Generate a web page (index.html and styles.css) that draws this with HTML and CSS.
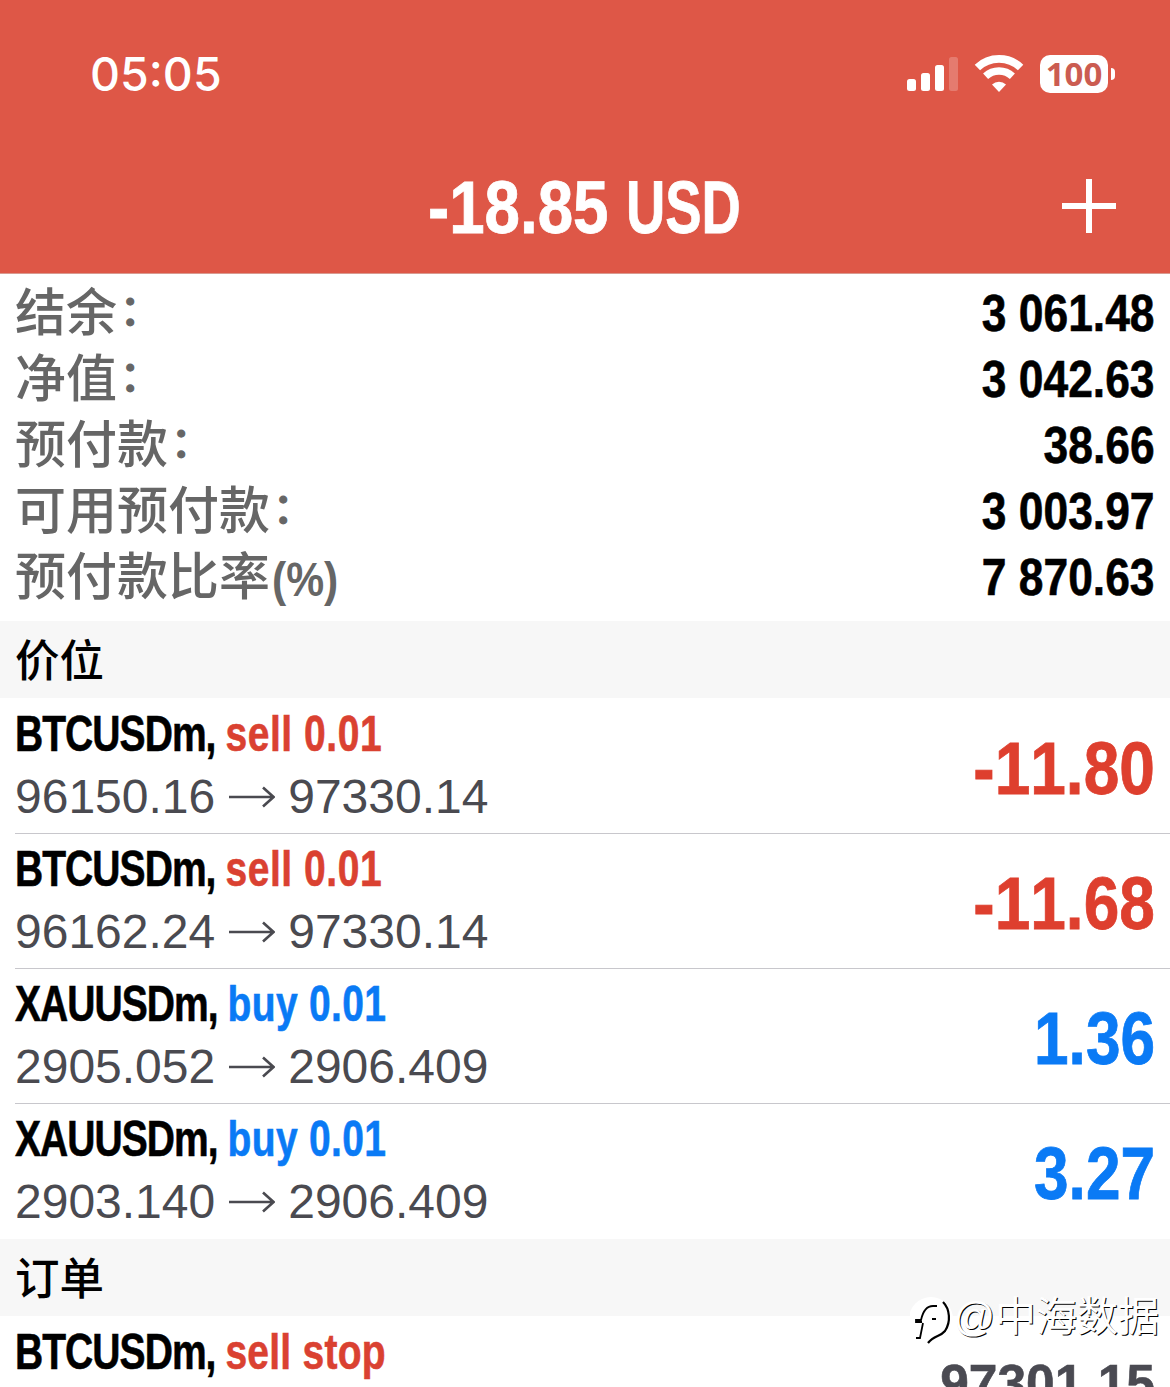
FILE: index.html
```html
<!DOCTYPE html>
<html lang="zh-CN">
<head>
  <meta charset="UTF-8">
  <title>交易</title>
  <link rel="stylesheet" href="styles.css">
</head>
<body>

  <div class="screen">
    <header class="header">
      <div class="status-bar">
        <span class="time">05:05</span>
        <div class="status-icons">
          <svg class="signal" width="52" height="36" viewBox="0 0 52 36" fill="#fff">
            <rect x="0" y="23" width="9" height="12" rx="2.5"/>
            <rect x="14" y="17" width="9" height="18" rx="2.5"/>
            <rect x="28" y="9" width="9" height="26" rx="2.5"/>
            <rect x="42" y="1" width="9" height="34" rx="2.5" opacity="0.22"/>
          </svg>
          <svg class="wifi" width="50" height="38" viewBox="0 0 50 38">
            <path d="M3.4 12.5 A31.5 31.5 0 0 1 46.6 12.5" fill="none" stroke="#fff" stroke-width="7.8"/>
            <path d="M11.6 21.3 A19.7 19.7 0 0 1 38.4 21.3" fill="none" stroke="#fff" stroke-width="7.4"/>
            <path d="M25 37 L18 29.5 A10.5 10.5 0 0 1 32 29.5 Z" fill="#fff"/>
          </svg>
          <div class="battery"><span>100</span></div>
        </div>
      </div>
      <div class="title-bar">
        <h1><span class="amount">-18.85</span> <span class="currency">USD</span></h1>
        <svg class="plus" width="54" height="54" viewBox="0 0 54 54" fill="#fff">
          <rect x="24" y="0" width="6" height="54"/>
          <rect x="0" y="24" width="54" height="6"/>
        </svg>
      </div>
    </header>

    <div class="summary">
      <div class="summary-row"><span class="label">结余<i>：</i></span><span class="value">3 061.48</span></div>
      <div class="summary-row"><span class="label">净值<i>：</i></span><span class="value">3 042.63</span></div>
      <div class="summary-row"><span class="label">预付款<i>：</i></span><span class="value">38.66</span></div>
      <div class="summary-row"><span class="label">可用预付款<i>：</i></span><span class="value">3 003.97</span></div>
      <div class="summary-row"><span class="label">预付款比率<b>(%)</b></span><span class="value">7 870.63</span></div>
    </div>

    <h2 class="section-title">价位</h2>
    <div class="list">
      <div class="item">
        <div class="info">
          <div class="symbol">BTCUSDm, <span class="sell">sell 0.01</span></div>
          <div class="prices">96150.16<svg class="arrow" width="46" height="22" viewBox="0 0 46 22"><path d="M0 11H44M34 1.5L44.5 11L34 20.5"/></svg>97330.14</div>
        </div>
        <div class="profit loss">-11.80</div>
      </div>
      <div class="item">
        <div class="info">
          <div class="symbol">BTCUSDm, <span class="sell">sell 0.01</span></div>
          <div class="prices">96162.24<svg class="arrow" width="46" height="22" viewBox="0 0 46 22"><path d="M0 11H44M34 1.5L44.5 11L34 20.5"/></svg>97330.14</div>
        </div>
        <div class="profit loss">-11.68</div>
      </div>
      <div class="item">
        <div class="info">
          <div class="symbol">XAUUSDm, <span class="buy">buy 0.01</span></div>
          <div class="prices">2905.052<svg class="arrow" width="46" height="22" viewBox="0 0 46 22"><path d="M0 11H44M34 1.5L44.5 11L34 20.5"/></svg>2906.409</div>
        </div>
        <div class="profit gain">1.36</div>
      </div>
      <div class="item">
        <div class="info">
          <div class="symbol">XAUUSDm, <span class="buy">buy 0.01</span></div>
          <div class="prices">2903.140<svg class="arrow" width="46" height="22" viewBox="0 0 46 22"><path d="M0 11H44M34 1.5L44.5 11L34 20.5"/></svg>2906.409</div>
        </div>
        <div class="profit gain">3.27</div>
      </div>
    </div>

    <h2 class="section-title">订单</h2>
    <div class="list">
      <div class="item">
        <div class="info">
          <div class="symbol">BTCUSDm, <span class="sell stop">sell stop</span></div>
        </div>
        <div class="order-price">97301.15</div>
      </div>
    </div>

    <div class="watermark">
      <svg width="46" height="54" viewBox="0 0 46 54">
        <circle cx="21" cy="24" r="22" fill="#fff"/>
        <path d="M6 25H11C13 16 17 11 23 11H27M22 24H26" fill="none" stroke="#000" stroke-width="1.8"/>
        <path d="M6 24V27H12M13 28L10 43H6" fill="none" stroke="#000" stroke-width="1.8"/>
        <path d="M33 7C40 14 41 27 35 36C30 42 24 40 18 48" fill="none" stroke="#000" stroke-width="2.2"/>
      </svg>
      <span><b>@</b>中海数据</span>
    </div>
  </div>

</body>
</html>
```
FILE: styles.css
```css
* {
  margin: 0;
  padding: 0;
  box-sizing: border-box;
}

body {
  background: #fff;
  font-family: "Liberation Sans", "Noto Sans CJK SC", sans-serif;
  font-kerning: none;
}

.screen {
  position: relative;
  width: 1170px;
  height: 1387px;
  overflow: hidden;
}

.header {
  height: 274px;
  background: #de5747;
  border-bottom: 1px solid #d99a90;
  color: #fff;
}

.status-bar {
  display: flex;
  justify-content: space-between;
  align-items: center;
  height: 148px;
  padding: 0 55px 0 90px;
}

.time {
  font-family: Inter, sans-serif;
  font-size: 46.5px;
  font-weight: 500;
  font-feature-settings: "calt", "case";
}

.status-icons {
  display: flex;
  align-items: center;
}

.wifi {
  margin: 0 16px 0 15px;
}

.battery {
  position: relative;
  width: 68px;
  height: 38px;
  margin-right: 7px;
  border-radius: 10px;
  background: #fff;
  color: #cb5c51;
  font: bold 33px/38px "Noto Sans", sans-serif;
  text-align: center;
}

.battery::after {
  content: "";
  position: absolute;
  left: 71px;
  top: 13px;
  width: 4px;
  height: 12px;
  border-radius: 0 5px 5px 0;
  background: #fff;
}

.title-bar {
  display: grid;
  grid-template-columns: 1fr auto 1fr;
  align-items: center;
  height: 116px;
  padding: 0 54px;
}

.title-bar h1 {
  grid-column: 2;
  display: flex;
  gap: 15px;
  margin-top: 4px;
  font-size: 74px;
  line-height: 112px;
  -webkit-text-stroke: 0.8px;
}

.amount {
  margin-left: -2px;
  margin-right: -27px;
  transform: scaleX(0.86);
  transform-origin: left;
}

.currency {
  margin-right: -42px;
  transform: scaleX(0.735);
  transform-origin: left;
}

.plus {
  justify-self: end;
}

.summary {
  height: 347px;
  padding: 7px 15px 0;
}

.summary-row {
  display: flex;
  justify-content: space-between;
  height: 66px;
  line-height: 66px;
  font-size: 51px;
}

.label {
  margin-top: -5px;
  color: #666;
  font-family: "Noto Sans CJK SC", sans-serif;
  font-weight: 500;
}

.label i {
  display: inline-block;
  font-style: normal;
  transform: translate(-2px, -2px) scale(0.8);
  -webkit-text-stroke: 1.6px;
}

.label b {
  display: inline-block;
  font-family: "Liberation Sans", sans-serif;
  font-size: 49px;
  transform: translate(2px, 1px) scaleX(0.87);
  transform-origin: left;
}

.value {
  font-weight: bold;
  transform: scaleX(0.87);
  transform-origin: right;
  -webkit-text-stroke: 0.6px;
}

.section-title {
  height: 77px;
  padding-left: 15px;
  background: #f7f7f7;
  font-family: "Noto Sans CJK SC", sans-serif;
  font-size: 44.5px;
  font-weight: 500;
  line-height: 73px;
}

.list {
  padding-left: 15px;
}

.item {
  display: flex;
  justify-content: space-between;
  height: 135px;
  padding-top: 1px;
  padding-right: 15px;
}

.item + .item {
  padding-top: 0;
  border-top: 1px solid #c8c7cc;
}

.item:last-child {
  height: 136px;
}

.symbol {
  height: 71px;
  font-size: 50px;
  font-weight: bold;
  line-height: 71px;
  white-space: nowrap;
  letter-spacing: -1.2px;
  transform: scaleX(0.78);
  transform-origin: left;
  -webkit-text-stroke: 0.6px;
}

.sell {
  color: #da4131;
  letter-spacing: 0.7px;
}

.stop {
  letter-spacing: 0.3px;
}

.buy {
  color: #0a7af5;
  letter-spacing: 0.4px;
}

.prices {
  display: flex;
  align-items: center;
  height: 54px;
  color: #4a4a50;
  font-size: 48px;
  line-height: 54px;
}

.arrow {
  margin: 0 13px 0 14px;
  fill: none;
  stroke: #4a4a50;
  stroke-width: 2.6;
}

.profit {
  font-size: 74px;
  font-weight: bold;
  line-height: 139px;
  transform: scaleX(0.865);
  transform-origin: right;
  -webkit-text-stroke: 0.8px;
}

.loss {
  color: #de3f2e;
}

.gain {
  color: #0a7af5;
  transform: scaleX(0.84);
}

.order-price {
  padding-top: 36px;
  color: #4a4a52;
  font-size: 51.5px;
  font-weight: bold;
  -webkit-text-stroke: 0.6px;
}

.watermark {
  position: absolute;
  right: 11px;
  bottom: 29px;
  display: flex;
  align-items: center;
  color: #fff;
  font-family: "Noto Sans CJK SC", sans-serif;
  font-size: 41px;
  line-height: 54px;
  text-shadow: 1px 1px 0 #000;
}

.watermark span {
  margin-bottom: 14px;
}

.watermark b {
  margin-left: -3px;
  font-family: "Liberation Sans", sans-serif;
  font-weight: normal;
}
```
